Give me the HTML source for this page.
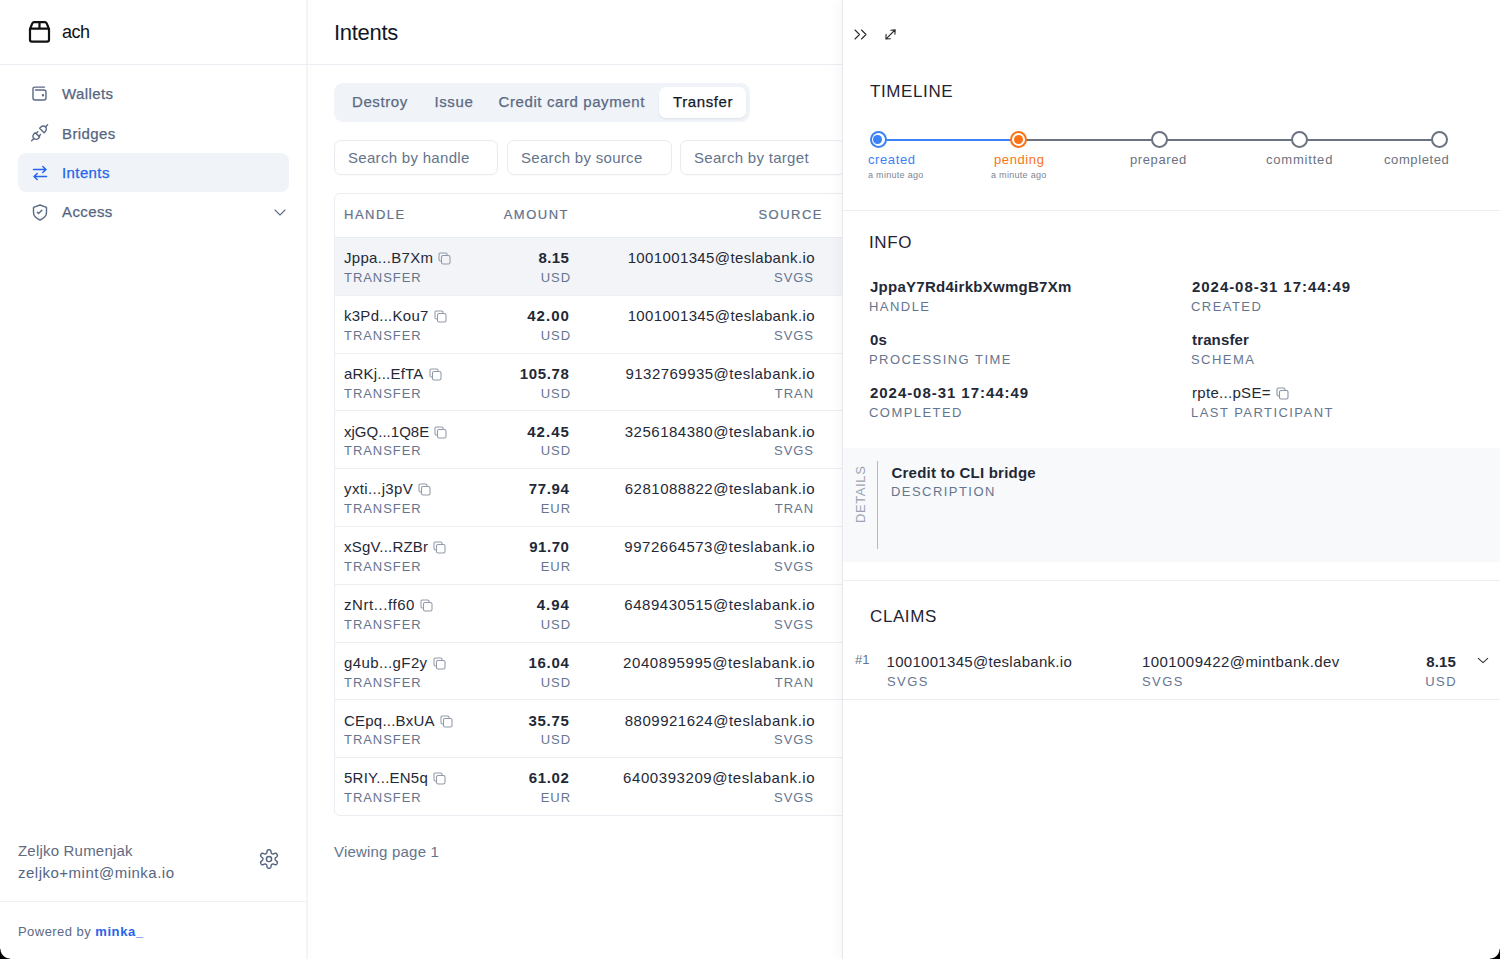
<!DOCTYPE html>
<html><head><meta charset="utf-8">
<style>
*{box-sizing:border-box;margin:0;padding:0}
html,body{width:1500px;height:959px;overflow:hidden;background:#fff}
body{position:relative;font-family:"Liberation Sans",sans-serif;color:#111827}
.a{position:absolute;white-space:nowrap;line-height:1}
svg{position:absolute;overflow:visible}
#side{position:absolute;left:0;top:0;width:306px;height:959px;background:#fff}
#vl{position:absolute;left:306px;top:0;width:2px;height:959px;background:#f4f4f6}
#vl2{position:absolute;left:310px;top:0;width:1px;height:959px;background:#fbfbfc}
.hl{position:absolute;height:1px;background:#edf0f4}
.nav{font-size:15px;color:#56657f;letter-spacing:0.4px;-webkit-text-stroke:0.25px currentColor}
.cap{font-size:13px;color:#66758f;letter-spacing:0.95px}
.val{font-size:15px;color:#1f2937;letter-spacing:0.3px}
.b{font-weight:700;letter-spacing:0.15px}
#panel{position:absolute;left:842px;top:0;width:658px;height:959px;background:#fff;border-left:1px solid #e6e8ec;box-shadow:-3px 0 12px rgba(20,30,50,0.04)}
#tabs{position:absolute;left:334px;top:83px;width:416px;height:39px;border-radius:9px;background:#f0f3f8}
.tab{position:absolute;top:94px;font-size:15px;color:#5b6a84;letter-spacing:0.6px;-webkit-text-stroke:0.25px currentColor;white-space:nowrap;line-height:1}
#act{position:absolute;left:659px;top:87px;width:87px;height:31px;border-radius:7px;background:#fff;box-shadow:0 1px 2px rgba(0,0,0,0.08)}
.inp{position:absolute;top:140px;height:35px;border:1px solid #e8ebf0;border-radius:7px;background:#fff;box-shadow:0 1px 1px rgba(0,0,0,0.02)}
.inp span{position:absolute;left:13px;top:9px;font-size:15px;color:#64748b;letter-spacing:0.3px;white-space:nowrap;line-height:1}
#tbl{position:absolute;left:334px;top:193px;width:520px;height:623px;border:1px solid #eaedf1;border-radius:6px;background:#fff}
.th{position:absolute;top:208px;font-size:13px;color:#63728b;letter-spacing:1.5px;-webkit-text-stroke:0.2px #63728b;white-space:nowrap;line-height:1}
.cp{position:relative;display:inline-block;vertical-align:-2px;margin-left:5px}
.sec{font-size:17px;color:#1f2430;letter-spacing:0.6px}
.dot{position:absolute;top:131.3px;width:17px;height:17px;border-radius:50%;border:2.2px solid #6b7280;background:#fff}
.dot i{position:absolute;left:1.9px;top:1.9px;width:8.8px;height:8.8px;border-radius:50%}
.tl{top:153px;font-size:13px;color:#6b7280;letter-spacing:0.6px}
.tls{top:171px;font-size:9px;color:#7c8595;letter-spacing:0.3px}
.cap2{font-size:13px;color:#66758f;letter-spacing:1.45px}
.corner{position:absolute;width:10px;height:10px;bottom:0;z-index:5}
</style></head><body>

<!-- SIDEBAR -->
<div id="vl"></div><div id="vl2"></div>
<div id="side">
  
  <svg style="left:28px;top:20px" width="23" height="23" viewBox="0 0 23 23" fill="none" stroke="#111" stroke-width="2.2" stroke-linejoin="round">
    <path d="M2 9 L4.3 3.4 Q4.8 2.2 6.2 2.2 H16.8 Q18.2 2.2 18.7 3.4 L21 9 V19.8 Q21 21.6 19.2 21.6 H3.8 Q2 21.6 2 19.8 Z"/>
    <path d="M2 8.6 H21 M11.5 2.2 V8.6"/>
  </svg>
  <div class="a" style="left:62px;top:23px;font-size:18px;color:#111;letter-spacing:-0.5px">ach</div>

  <div style="position:absolute;left:18px;top:153px;width:271px;height:39px;border-radius:8px;background:#f0f3f7"></div>

  <!-- wallet icon -->
  <svg style="left:32px;top:86px" width="16" height="16" viewBox="0 0 16 16" fill="none" stroke="#5b6a84" stroke-width="1.4" stroke-linecap="round" stroke-linejoin="round">
    <path d="M12.5 1.1 H3 Q1 1.1 1 3 V12 Q1 14 3 14 H12 Q14 14 14 12 V6 Q14 4 12 4 H3.5"/>
    <circle cx="11" cy="9.3" r="0.5" fill="#5b6a84"/>
  </svg>
  <div class="a nav" style="left:62px;top:86px">Wallets</div>

  <!-- bridges icon -->
  <svg style="left:29.3px;top:122.3px" width="21.3" height="21.3" viewBox="0 0 24 24" fill="none" stroke="#5b6a84" stroke-width="1.6" stroke-linecap="round" stroke-linejoin="round">
    <path d="M7 12l5 5l-1.5 1.5a3.536 3.536 0 1 1 -5 -5l1.5 -1.5z"/>
    <path d="M17 12l-5 -5l1.5 -1.5a3.536 3.536 0 1 1 5 5l-1.5 1.5z"/>
    <path d="M3 21l2.5 -2.5"/><path d="M18.5 5.5l2.5 -2.5"/><path d="M10 11l-2 2"/><path d="M13 14l-2 2"/>
  </svg>
  <div class="a nav" style="left:62px;top:126px">Bridges</div>

  <!-- intents icon -->
  <svg style="left:32px;top:165px" width="16" height="16" viewBox="0 0 16 16" fill="none" stroke="#2563eb" stroke-width="1.5" stroke-linecap="round" stroke-linejoin="round">
    <path d="M1.5 4.5 H14 M10.8 1.5 L14 4.5 L10.8 7.5"/>
    <path d="M14.5 11.5 H2 M5.2 8.5 L2 11.5 L5.2 14.5"/>
  </svg>
  <div class="a nav" style="left:62px;top:165px;color:#2563eb">Intents</div>

  <!-- access icon -->
  <svg style="left:32px;top:204px" width="16" height="17" viewBox="0 0 16 17" fill="none" stroke="#5b6a84" stroke-width="1.4" stroke-linecap="round" stroke-linejoin="round">
    <path d="M8 1 L14.5 3.4 V8.6 Q14.5 13.4 8 16 Q1.5 13.4 1.5 8.6 V3.4 Z"/>
    <path d="M5.3 8.3 L6.6 9.5 L9.9 6.3"/>
  </svg>
  <div class="a nav" style="left:62px;top:204px">Access</div>
  <svg style="left:274px;top:209px" width="12" height="7" viewBox="0 0 12 7" fill="none" stroke="#5f6d85" stroke-width="1.1" stroke-linecap="round" stroke-linejoin="round">
    <path d="M1 1 L6 6 L11 1"/>
  </svg>

  <div class="a" style="left:18px;top:843px;font-size:15px;color:#5f6b80;letter-spacing:0.2px">Zeljko Rumenjak</div>
  <div class="a" style="left:18px;top:865px;font-size:15px;color:#56657f;letter-spacing:0.5px">zeljko+mint@minka.io</div>
  <!-- gear -->
  <svg style="left:257.4px;top:847px" width="24" height="24" viewBox="0 0 24 24" fill="none" stroke="#56657f" stroke-width="1.45" stroke-linejoin="round">
    <path d="M12.00 2.70 L12.32 2.72 L12.65 2.76 L12.96 2.86 L13.26 3.02 L13.54 3.28 L13.77 3.69 L13.93 4.25 L14.04 4.87 L14.13 5.43 L14.24 5.85 L14.37 6.13 L14.52 6.33 L14.69 6.48 L14.87 6.61 L15.05 6.72 L15.24 6.82 L15.43 6.91 L15.65 6.98 L15.90 7.01 L16.21 6.98 L16.62 6.87 L17.15 6.67 L17.75 6.45 L18.31 6.32 L18.78 6.31 L19.15 6.42 L19.44 6.60 L19.68 6.82 L19.88 7.08 L20.05 7.35 L20.20 7.64 L20.32 7.94 L20.40 8.26 L20.41 8.60 L20.32 8.97 L20.08 9.38 L19.68 9.80 L19.19 10.21 L18.75 10.56 L18.45 10.86 L18.27 11.12 L18.17 11.35 L18.13 11.57 L18.11 11.79 L18.10 12.00 L18.11 12.21 L18.13 12.43 L18.17 12.65 L18.27 12.88 L18.45 13.14 L18.75 13.44 L19.19 13.79 L19.68 14.20 L20.08 14.62 L20.32 15.03 L20.41 15.40 L20.40 15.74 L20.32 16.06 L20.20 16.36 L20.05 16.65 L19.88 16.92 L19.68 17.18 L19.44 17.40 L19.15 17.58 L18.78 17.69 L18.31 17.68 L17.75 17.55 L17.15 17.33 L16.62 17.13 L16.21 17.02 L15.90 16.99 L15.65 17.02 L15.43 17.09 L15.24 17.18 L15.05 17.28 L14.87 17.39 L14.69 17.52 L14.52 17.67 L14.37 17.87 L14.24 18.15 L14.13 18.57 L14.04 19.13 L13.93 19.75 L13.77 20.31 L13.54 20.72 L13.26 20.98 L12.96 21.14 L12.65 21.24 L12.32 21.28 L12.00 21.30 L11.68 21.28 L11.35 21.24 L11.04 21.14 L10.74 20.98 L10.46 20.72 L10.23 20.31 L10.07 19.75 L9.96 19.13 L9.87 18.57 L9.76 18.15 L9.63 17.87 L9.48 17.67 L9.31 17.52 L9.13 17.39 L8.95 17.28 L8.76 17.18 L8.57 17.09 L8.35 17.02 L8.10 16.99 L7.79 17.02 L7.38 17.13 L6.85 17.33 L6.25 17.55 L5.69 17.68 L5.22 17.69 L4.85 17.58 L4.56 17.40 L4.32 17.18 L4.12 16.92 L3.95 16.65 L3.80 16.36 L3.68 16.06 L3.60 15.74 L3.59 15.40 L3.68 15.03 L3.92 14.62 L4.32 14.20 L4.81 13.79 L5.25 13.44 L5.55 13.14 L5.73 12.88 L5.83 12.65 L5.87 12.43 L5.89 12.21 L5.90 12.00 L5.89 11.79 L5.87 11.57 L5.83 11.35 L5.73 11.12 L5.55 10.86 L5.25 10.56 L4.81 10.21 L4.32 9.80 L3.92 9.38 L3.68 8.97 L3.59 8.60 L3.60 8.26 L3.68 7.94 L3.80 7.64 L3.95 7.35 L4.12 7.08 L4.32 6.82 L4.56 6.60 L4.85 6.42 L5.22 6.31 L5.69 6.32 L6.25 6.45 L6.85 6.67 L7.38 6.87 L7.79 6.98 L8.10 7.01 L8.35 6.98 L8.57 6.91 L8.76 6.82 L8.95 6.72 L9.13 6.61 L9.31 6.48 L9.48 6.33 L9.63 6.13 L9.76 5.85 L9.87 5.43 L9.96 4.87 L10.07 4.25 L10.23 3.69 L10.46 3.28 L10.74 3.02 L11.04 2.86 L11.35 2.76 L11.68 2.72 Z"/>
    <circle cx="12" cy="12" r="2.6"/>
  </svg>
  <div class="hl" style="left:0;top:901px;width:306px"></div>
  <div class="a" style="left:18px;top:925px;font-size:13px;color:#5b6a84;letter-spacing:0.45px">Powered by <span style="color:#2563eb;font-weight:700;letter-spacing:0.6px">minka_</span></div>
</div>

<!-- MAIN -->
<div id="main">
  <div class="a" style="left:334px;top:22px;font-size:22px;color:#111827;letter-spacing:-0.3px">Intents</div>
  <div class="hl" style="left:0;top:64px;width:842px;background:#eaeef3"></div>
  <div id="tabs"></div>
    <div class="tab" style="left:352px">Destroy</div>
    <div class="tab" style="left:434.5px">Issue</div>
    <div class="tab" style="left:498.5px">Credit card payment</div>
    <div id="act"></div>
    <div class="tab" style="left:673px;color:#111827">Transfer</div>
  <div class="inp" style="left:334px;width:164px"><span>Search by handle</span></div>
  <div class="inp" style="left:507px;width:165px"><span>Search by source</span></div>
  <div class="inp" style="left:680px;width:165px"><span>Search by target</span></div>
  <div id="tbl"></div>
    <div class="th" style="left:344px">HANDLE</div>
    <div class="th" style="right:931px">AMOUNT</div>
    <div class="th" style="right:677px">SOURCE</div>
    <div class="hl" style="left:334px;top:237px;width:520px;background:#e9ecf1"></div>
    <div style="position:absolute;left:335px;top:238px;width:520px;height:57px;background:#f2f4f7"></div>
    <div class="a val" style="left:344px;top:250px;letter-spacing:0.31px">Jppa...B7Xm<svg class="cp" width="13" height="13" viewBox="0 0 13 13" fill="none" stroke="#9199a8" stroke-width="1.05" stroke-linejoin="round"><rect x="3.5" y="3.5" width="8.5" height="8.5" rx="1.6"/><path d="M9 3.2 V2.4 Q9 1 7.6 1 H2.4 Q1 1 1 2.4 V7.6 Q1 9 2.4 9 H3.2"/></svg></div>
    <div class="a cap" style="left:344px;top:271px">TRANSFER</div>
    <div class="a val b" style="right:930.74px;top:250px;letter-spacing:0.41px">8.15</div>
    <div class="a cap" style="right:929px;top:271px">USD</div>
    <div class="a val" style="right:685.13px;top:250px;letter-spacing:0.37px">1001001345@teslabank.io</div>
    <div class="a cap" style="right:686px;top:271px">SVGS</div>
    <div class="hl" style="left:334px;top:294.8px;width:520px;background:#eceef2"></div>
    <div class="a val" style="left:344px;top:308px;letter-spacing:0.26px">k3Pd...Kou7<svg class="cp" width="13" height="13" viewBox="0 0 13 13" fill="none" stroke="#9199a8" stroke-width="1.05" stroke-linejoin="round"><rect x="3.5" y="3.5" width="8.5" height="8.5" rx="1.6"/><path d="M9 3.2 V2.4 Q9 1 7.6 1 H2.4 Q1 1 1 2.4 V7.6 Q1 9 2.4 9 H3.2"/></svg></div>
    <div class="a cap" style="left:344px;top:329px">TRANSFER</div>
    <div class="a val b" style="right:930.13px;top:308px;letter-spacing:1.02px">42.00</div>
    <div class="a cap" style="right:929px;top:329px">USD</div>
    <div class="a val" style="right:685.13px;top:308px;letter-spacing:0.37px">1001001345@teslabank.io</div>
    <div class="a cap" style="right:686px;top:329px">SVGS</div>
    <div class="hl" style="left:334px;top:352.6px;width:520px;background:#eceef2"></div>
    <div class="a val" style="left:344px;top:366px;letter-spacing:0.21px">aRKj...EfTA<svg class="cp" width="13" height="13" viewBox="0 0 13 13" fill="none" stroke="#9199a8" stroke-width="1.05" stroke-linejoin="round"><rect x="3.5" y="3.5" width="8.5" height="8.5" rx="1.6"/><path d="M9 3.2 V2.4 Q9 1 7.6 1 H2.4 Q1 1 1 2.4 V7.6 Q1 9 2.4 9 H3.2"/></svg></div>
    <div class="a cap" style="left:344px;top:387px">TRANSFER</div>
    <div class="a val b" style="right:930.50px;top:366px;letter-spacing:0.65px">105.78</div>
    <div class="a cap" style="right:929px;top:387px">USD</div>
    <div class="a val" style="right:685.03px;top:366px;letter-spacing:0.47px">9132769935@teslabank.io</div>
    <div class="a cap" style="right:686px;top:387px">TRAN</div>
    <div class="hl" style="left:334px;top:410.4px;width:520px;background:#eceef2"></div>
    <div class="a val" style="left:344px;top:424px;letter-spacing:0.02px">xjGQ...1Q8E<svg class="cp" width="13" height="13" viewBox="0 0 13 13" fill="none" stroke="#9199a8" stroke-width="1.05" stroke-linejoin="round"><rect x="3.5" y="3.5" width="8.5" height="8.5" rx="1.6"/><path d="M9 3.2 V2.4 Q9 1 7.6 1 H2.4 Q1 1 1 2.4 V7.6 Q1 9 2.4 9 H3.2"/></svg></div>
    <div class="a cap" style="left:344px;top:444px">TRANSFER</div>
    <div class="a val b" style="right:930.13px;top:424px;letter-spacing:1.02px">42.45</div>
    <div class="a cap" style="right:929px;top:444px">USD</div>
    <div class="a val" style="right:685.00px;top:424px;letter-spacing:0.50px">3256184380@teslabank.io</div>
    <div class="a cap" style="right:686px;top:444px">SVGS</div>
    <div class="hl" style="left:334px;top:468.2px;width:520px;background:#eceef2"></div>
    <div class="a val" style="left:344px;top:481px;letter-spacing:0.38px">yxti...j3pV<svg class="cp" width="13" height="13" viewBox="0 0 13 13" fill="none" stroke="#9199a8" stroke-width="1.05" stroke-linejoin="round"><rect x="3.5" y="3.5" width="8.5" height="8.5" rx="1.6"/><path d="M9 3.2 V2.4 Q9 1 7.6 1 H2.4 Q1 1 1 2.4 V7.6 Q1 9 2.4 9 H3.2"/></svg></div>
    <div class="a cap" style="left:344px;top:502px">TRANSFER</div>
    <div class="a val b" style="right:930.50px;top:481px;letter-spacing:0.65px">77.94</div>
    <div class="a cap" style="right:929px;top:502px">EUR</div>
    <div class="a val" style="right:685.00px;top:481px;letter-spacing:0.50px">6281088822@teslabank.io</div>
    <div class="a cap" style="right:686px;top:502px">TRAN</div>
    <div class="hl" style="left:334px;top:526.0px;width:520px;background:#eceef2"></div>
    <div class="a val" style="left:344px;top:539px;letter-spacing:0.21px">xSgV...RZBr<svg class="cp" width="13" height="13" viewBox="0 0 13 13" fill="none" stroke="#9199a8" stroke-width="1.05" stroke-linejoin="round"><rect x="3.5" y="3.5" width="8.5" height="8.5" rx="1.6"/><path d="M9 3.2 V2.4 Q9 1 7.6 1 H2.4 Q1 1 1 2.4 V7.6 Q1 9 2.4 9 H3.2"/></svg></div>
    <div class="a cap" style="left:344px;top:560px">TRANSFER</div>
    <div class="a val b" style="right:930.62px;top:539px;letter-spacing:0.53px">91.70</div>
    <div class="a cap" style="right:929px;top:560px">EUR</div>
    <div class="a val" style="right:684.98px;top:539px;letter-spacing:0.52px">9972664573@teslabank.io</div>
    <div class="a cap" style="right:686px;top:560px">SVGS</div>
    <div class="hl" style="left:334px;top:583.8px;width:520px;background:#eceef2"></div>
    <div class="a val" style="left:344px;top:597px;letter-spacing:0.57px">zNrt...ff60<svg class="cp" width="13" height="13" viewBox="0 0 13 13" fill="none" stroke="#9199a8" stroke-width="1.05" stroke-linejoin="round"><rect x="3.5" y="3.5" width="8.5" height="8.5" rx="1.6"/><path d="M9 3.2 V2.4 Q9 1 7.6 1 H2.4 Q1 1 1 2.4 V7.6 Q1 9 2.4 9 H3.2"/></svg></div>
    <div class="a cap" style="left:344px;top:618px">TRANSFER</div>
    <div class="a val b" style="right:930.16px;top:597px;letter-spacing:0.99px">4.94</div>
    <div class="a cap" style="right:929px;top:618px">USD</div>
    <div class="a val" style="right:684.98px;top:597px;letter-spacing:0.52px">6489430515@teslabank.io</div>
    <div class="a cap" style="right:686px;top:618px">SVGS</div>
    <div class="hl" style="left:334px;top:641.6px;width:520px;background:#eceef2"></div>
    <div class="a val" style="left:344px;top:655px;letter-spacing:0.39px">g4ub...gF2y<svg class="cp" width="13" height="13" viewBox="0 0 13 13" fill="none" stroke="#9199a8" stroke-width="1.05" stroke-linejoin="round"><rect x="3.5" y="3.5" width="8.5" height="8.5" rx="1.6"/><path d="M9 3.2 V2.4 Q9 1 7.6 1 H2.4 Q1 1 1 2.4 V7.6 Q1 9 2.4 9 H3.2"/></svg></div>
    <div class="a cap" style="left:344px;top:676px">TRANSFER</div>
    <div class="a val b" style="right:930.46px;top:655px;letter-spacing:0.69px">16.04</div>
    <div class="a cap" style="right:929px;top:676px">USD</div>
    <div class="a val" style="right:684.92px;top:655px;letter-spacing:0.58px">2040895995@teslabank.io</div>
    <div class="a cap" style="right:686px;top:676px">TRAN</div>
    <div class="hl" style="left:334px;top:699.4px;width:520px;background:#eceef2"></div>
    <div class="a val" style="left:344px;top:713px;letter-spacing:0.22px">CEpq...BxUA<svg class="cp" width="13" height="13" viewBox="0 0 13 13" fill="none" stroke="#9199a8" stroke-width="1.05" stroke-linejoin="round"><rect x="3.5" y="3.5" width="8.5" height="8.5" rx="1.6"/><path d="M9 3.2 V2.4 Q9 1 7.6 1 H2.4 Q1 1 1 2.4 V7.6 Q1 9 2.4 9 H3.2"/></svg></div>
    <div class="a cap" style="left:344px;top:733px">TRANSFER</div>
    <div class="a val b" style="right:930.46px;top:713px;letter-spacing:0.69px">35.75</div>
    <div class="a cap" style="right:929px;top:733px">USD</div>
    <div class="a val" style="right:685.00px;top:713px;letter-spacing:0.50px">8809921624@teslabank.io</div>
    <div class="a cap" style="right:686px;top:733px">SVGS</div>
    <div class="hl" style="left:334px;top:757.2px;width:520px;background:#eceef2"></div>
    <div class="a val" style="left:344px;top:770px;letter-spacing:0.23px">5RIY...EN5q<svg class="cp" width="13" height="13" viewBox="0 0 13 13" fill="none" stroke="#9199a8" stroke-width="1.05" stroke-linejoin="round"><rect x="3.5" y="3.5" width="8.5" height="8.5" rx="1.6"/><path d="M9 3.2 V2.4 Q9 1 7.6 1 H2.4 Q1 1 1 2.4 V7.6 Q1 9 2.4 9 H3.2"/></svg></div>
    <div class="a cap" style="left:344px;top:791px">TRANSFER</div>
    <div class="a val b" style="right:930.50px;top:770px;letter-spacing:0.65px">61.02</div>
    <div class="a cap" style="right:929px;top:791px">EUR</div>
    <div class="a val" style="right:684.92px;top:770px;letter-spacing:0.58px">6400393209@teslabank.io</div>
    <div class="a cap" style="right:686px;top:791px">SVGS</div>
  <div class="a" style="left:334px;top:844px;font-size:15px;color:#64748b;letter-spacing:0.2px">Viewing page 1</div>
</div>

<!-- PANEL -->
<div id="panel"></div>
<svg style="left:854px;top:29px" width="13" height="11" viewBox="0 0 13 11" fill="none" stroke="#2a2a2a" stroke-width="1.1" stroke-linecap="round" stroke-linejoin="round"><path d="M1 1 L5.5 5.5 L1 10 M7.5 1 L12 5.5 L7.5 10"/></svg>
<svg style="left:885px;top:29px" width="11" height="11" viewBox="0 0 11 11" fill="none" stroke="#2a2a2a" stroke-width="1.1" stroke-linecap="round" stroke-linejoin="round"><path d="M1.6 9.4 L10 1 M5.8 1.2 L10.2 0.9 L9.9 5.3 M1.1 5.4 L0.9 10 L5.4 9.8"/></svg>
<div class="a sec" style="left:870px;top:83px">TIMELINE</div>
<div style="position:absolute;left:878px;top:138.8px;width:140px;height:2.4px;background:#3b82f6"></div>
<div style="position:absolute;left:1018px;top:138.8px;width:421px;height:2.4px;background:#6b7280"></div>
<div class="dot" style="left:869.5px;border-color:#3b82f6"><i style="background:#3b82f6"></i></div>
<div class="dot" style="left:1010px;border-color:#f97316"><i style="background:#f97316"></i></div>
<div class="dot" style="left:1150.5px"></div>
<div class="dot" style="left:1290.5px"></div>
<div class="dot" style="left:1430.5px"></div>
<div class="a tl" style="left:868px;color:#3b82f6">created</div>
<div class="a tls" style="left:868px">a minute ago</div>
<div class="a tl" style="left:994px;color:#f97316">pending</div>
<div class="a tls" style="left:991px">a minute ago</div>
<div class="a tl" style="left:1130px">prepared</div>
<div class="a tl" style="left:1266px;letter-spacing:0.8px">committed</div>
<div class="a tl" style="left:1384px">completed</div>
<div class="hl" style="left:843px;top:210px;width:657px;background:#e9ecf0"></div>

<div class="a sec" style="left:869px;top:234px">INFO</div>
<div class="a val b" style="left:870px;top:279px;letter-spacing:0.27px">JppaY7Rd4irkbXwmgB7Xm</div>
<div class="a cap2" style="left:869px;top:300px">HANDLE</div>
<div class="a val b" style="left:1192px;top:279px;letter-spacing:0.95px">2024-08-31 17:44:49</div>
<div class="a cap2" style="left:1191px;top:300px">CREATED</div>
<div class="a val b" style="left:870px;top:332px">0s</div>
<div class="a cap2" style="left:869px;top:353px">PROCESSING TIME</div>
<div class="a val b" style="left:1192px;top:332px">transfer</div>
<div class="a cap2" style="left:1191px;top:353px">SCHEMA</div>
<div class="a val b" style="left:870px;top:385px;letter-spacing:0.95px">2024-08-31 17:44:49</div>
<div class="a cap2" style="left:869px;top:406px">COMPLETED</div>
<div class="a val" style="left:1192px;top:385px">rpte...pSE=<svg class="cp" width="13" height="13" viewBox="0 0 13 13" fill="none" stroke="#8a94a6" stroke-width="1.1" stroke-linejoin="round"><rect x="3.5" y="3.5" width="8.5" height="8.5" rx="1.6"/><path d="M9 3.2 V2.4 Q9 1 7.6 1 H2.4 Q1 1 1 2.4 V7.6 Q1 9 2.4 9 H3.2"/></svg></div>
<div class="a cap2" style="left:1191px;top:406px">LAST PARTICIPANT</div>

<div style="position:absolute;left:843px;top:448px;width:657px;height:114px;background:#f8f9fb"></div>
<div class="a" style="left:853.5px;top:523px;font-size:13px;color:#9aa3b2;letter-spacing:0.6px;transform:rotate(-90deg);transform-origin:0 0">DETAILS</div>
<div style="position:absolute;left:877px;top:461px;width:1px;height:88px;background:#b3b9c3"></div>
<div class="a val b" style="left:891.5px;top:465px;letter-spacing:0.22px">Credit to CLI bridge</div>
<div class="a cap2" style="left:891px;top:485px">DESCRIPTION</div>
<div class="hl" style="left:843px;top:580px;width:657px;background:#eceef2"></div>

<div class="a sec" style="left:870px;top:608px">CLAIMS</div>
<div class="a" style="left:855px;top:653px;font-size:13px;color:#66758f">#1</div>
<div class="a val" style="left:886.5px;top:654px">1001001345@teslabank.io</div>
<div class="a cap2" style="left:887px;top:675px">SVGS</div>
<div class="a val" style="left:1142px;top:654px;letter-spacing:0.43px">1001009422@mintbank.dev</div>
<div class="a cap2" style="left:1142px;top:675px">SVGS</div>
<div class="a val b" style="right:44px;top:654px">8.15</div>
<div class="a cap2" style="right:43px;top:675px">USD</div>
<svg style="left:1477px;top:657px" width="12" height="7" viewBox="0 0 12 7" fill="none" stroke="#333" stroke-width="1.1" stroke-linecap="round" stroke-linejoin="round"><path d="M1.3 1.3 L6 5.6 L10.7 1.3"/></svg>
<div class="hl" style="left:843px;top:699px;width:657px;background:#e9ecf0"></div>

<div class="corner" style="left:0;background:radial-gradient(circle at 10px 0px, transparent 9px, #000 10px)"></div>
<div class="corner" style="right:0;background:radial-gradient(circle at 0px 0px, transparent 9px, #000 10px)"></div>
</body></html>
